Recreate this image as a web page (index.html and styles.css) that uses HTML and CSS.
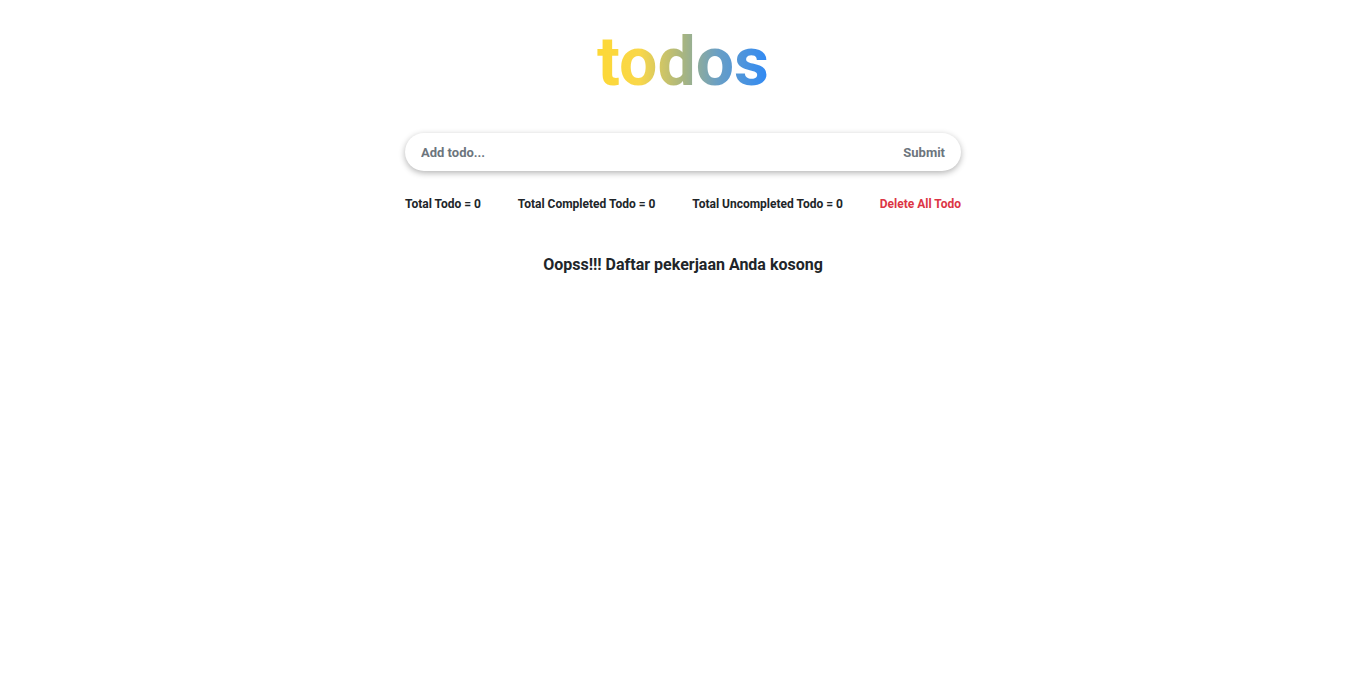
FILE: index.html
```html
<!DOCTYPE html>
<html lang="id">
<head>
<meta charset="utf-8">
<title>todos</title>
<link rel="stylesheet" href="styles.css">
</head>
<body>
<main class="app">
  <h1 class="title">todos</h1>
  <form class="todo-form">
    <input class="todo-input" type="text" placeholder="Add todo...">
    <button class="submit-btn" type="button">Submit</button>
  </form>
  <div class="stats">
    <span class="stat">Total Todo = 0</span>
    <span class="stat">Total Completed Todo = 0</span>
    <span class="stat">Total Uncompleted Todo = 0</span>
    <button class="delete-all" type="button">Delete All Todo</button>
  </div>
  <p class="empty">Oopss!!! Daftar pekerjaan Anda kosong</p>
</main>
</body>
</html>
```
FILE: styles.css
```css
* { box-sizing: border-box; }
html, body { margin: 0; padding: 0; background: #fff; }
body { font-family: Roboto, "Noto Sans", sans-serif; color: #212529; }
.app {
  width: 556px;
  margin: 0 auto;
  padding-top: 24px;
  display: flex;
  flex-direction: column;
  align-items: stretch;
}
.title {
  margin: 0 auto;
  font-size: 68px;
  line-height: 76px;
  font-weight: 700;
  background: linear-gradient(90deg, #fdd835 0%, #f9d74a 25%, #a8b580 50%, #6a9fc4 70%, #2f89f5 100%);
  -webkit-background-clip: text;
  background-clip: text;
  color: transparent;
}
.todo-form {
  margin-top: 33px;
  height: 38px;
  border-radius: 19px;
  box-shadow: 0 2px 6px rgba(0,0,0,0.3);
  display: flex;
  align-items: center;
  padding: 0 16px;
  background: #fff;
}
.todo-input {
  flex: 1;
  border: none;
  outline: none;
  font-family: inherit;
  font-size: 13px;
  font-weight: 700;
  color: #6c757d;
  background: transparent;
  padding: 0;
}
.todo-input::placeholder { color: #6c757d; opacity: 1; }
.submit-btn {
  border: none;
  background: transparent;
  font-family: inherit;
  font-size: 13px;
  font-weight: 700;
  color: #6c757d;
  padding: 0;
  cursor: pointer;
}
.stats {
  margin-top: 26px;
  display: flex;
  justify-content: space-between;
  align-items: center;
  font-size: 12px;
  font-weight: 700;
  line-height: 14px;
}
.stat { color: #212529; }
.delete-all {
  border: none;
  background: transparent;
  font-family: inherit;
  font-size: 12px;
  font-weight: 700;
  color: #dc3545;
  padding: 0;
  cursor: pointer;
}
.empty {
  margin: 44px 0 0;
  text-align: center;
  font-size: 16px;
  font-weight: 700;
  line-height: 19px;
}
```
